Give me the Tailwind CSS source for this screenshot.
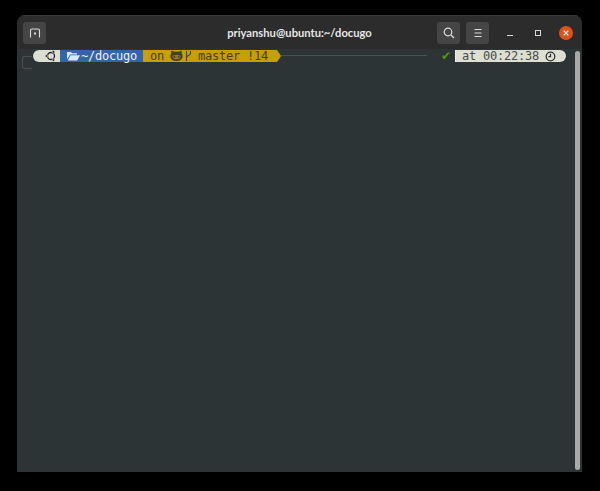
<!DOCTYPE html>
<html lang="en">
<head>
  <meta charset="UTF-8" />
  <title>priyanshu@ubuntu:~/docugo</title>
  <script src="https://cdn.jsdelivr.net/npm/@tailwindcss/browser@4"></script>
</head>
<body class="bg-black w-[600px] h-[491px] overflow-hidden pt-[15px] pl-[17px]">
  <div class="w-[565px] h-[457px] flex flex-col rounded-t-[8px] overflow-hidden">
    <!-- Header -->
    <header class="h-[34px] shrink-0 bg-[#2c2c2c] border-t border-[#3a3a3a] relative flex items-center pl-[6px] pr-[8px] font-['Lato',sans-serif]">
      <button class="w-[23px] h-[22px] rounded-[3px] bg-[#454545] flex items-center justify-center">
        <svg width="12" height="12" viewBox="0 0 12 12" fill="none" stroke="#dcdcdc" stroke-width="1.1">
          <path d="M1.500 10.500V3.500a1.500 1.500 0 0 1 1.500-1.500h6a1.500 1.500 0 0 1 1.500 1.500v7"/>
          <rect x="5" y="5.500" width="2" height="2" fill="#dcdcdc" stroke="none"/>
        </svg>
      </button>
      <h1 class="absolute left-0 right-0 text-center text-[#e6e6e6] text-[11.2px] font-bold leading-none">priyanshu@ubuntu:~/docugo</h1>
      <button class="ml-auto w-[23px] h-[22px] rounded-[3px] bg-[#454545] flex items-center justify-center">
        <svg width="12" height="12" viewBox="0 0 12 12" fill="none" stroke="#dcdcdc" stroke-width="1.2">
          <circle cx="5" cy="5" r="3.800"/>
          <path d="M8 8l3 3"/>
        </svg>
      </button>
      <button class="ml-[6px] w-[23px] h-[22px] rounded-[3px] bg-[#454545] flex items-center justify-center">
        <svg width="10" height="10" viewBox="0 0 10 10" stroke="#dcdcdc" stroke-width="1">
          <path d="M1.500 1.500h7M1.500 5h7M1.500 8.500h7"/>
        </svg>
      </button>
      <div class="ml-[16px] w-[10px] flex justify-center">
        <span class="block w-[6px] h-px mt-[5px] bg-[#d8d8d8]"></span>
      </div>
      <div class="ml-[18px] w-[10px] flex justify-center">
        <span class="block w-[6px] h-[6px] border border-[#d8d8d8]"></span>
      </div>
      <div class="ml-[16px] mr-px w-[14px] h-[14px] rounded-full bg-[#e0501c] flex items-center justify-center">
        <svg width="6" height="6" viewBox="0 0 6 6" stroke="#fff" stroke-width="1.2"><path d="M.7.700l4.600 4.600M5.300.700L.7 5.300"/></svg>
      </div>
    </header>

    <!-- Terminal -->
    <main class="flex-1 bg-[#2d3436] flex relative">
      <div class="flex-1 min-w-0 pl-[16px] pt-px">
        <div class="flex items-center h-[12px] font-['DejaVu_Sans_Mono',monospace] text-[12px] tracking-[-0.22px] leading-none whitespace-nowrap">
          <div class="w-[27px] h-full bg-[#dcdfd2] rounded-l-full flex items-center justify-end pr-[3px]">
            <svg width="12" height="12" viewBox="0 0 12 12" fill="none" stroke="#23262a" stroke-width="1.300">
              <circle cx="6" cy="6" r="3.500"/>
              <circle cx="1.500" cy="6" r="1.300" fill="#23262a" stroke="#dcdfd2" stroke-width=".6"/>
              <circle cx="8.400" cy="1.900" r="1.300" fill="#23262a" stroke="#dcdfd2" stroke-width=".6"/>
              <circle cx="8.400" cy="10.100" r="1.300" fill="#23262a" stroke="#dcdfd2" stroke-width=".6"/>
            </svg>
          </div>
          <div class="w-[83px] h-full bg-[#3465a4] text-[#eeeeec] flex items-center pl-[7px] gap-[1px]">
            <svg width="13" height="10" viewBox="0 0 13 10" fill="#dfe6ee">
              <path d="M0 1h4l1 1.200h5v1.300H3L0 8.500z"/>
              <path d="M3.500 4.300H13L10.200 9.500H.8z"/>
            </svg>
            <span>~/docugo</span>
          </div>
          <div class="w-[134px] h-full bg-[#c4a000] text-[#41401f] flex items-center pl-[7px]">
            <span>on</span>
            <svg class="ml-[6px]" width="13" height="12" viewBox="0 0 13 12" fill="#41401f">
              <path d="M1.500 .5l3 1.300h4l3-1.300.3 3c1 1.500 1.200 3.500.2 5-1 1.700-2.800 2.500-5.500 2.500S2 10.200 1 8.500c-1-1.500-.8-3.500.2-5z"/>
              <ellipse cx="6.500" cy="7" rx="4" ry="2.300" fill="#8a7a2a"/>
              <circle cx="4.300" cy="6.900" r=".9" fill="#41401f"/>
              <circle cx="8.700" cy="6.900" r=".9" fill="#41401f"/>
            </svg>
            <svg class="ml-[2px]" width="7" height="12" viewBox="0 0 7 12" fill="none" stroke="#41401f" stroke-width="1.100">
              <path d="M1.500 1v10M5.500 1v2.500c0 2-4 2-4 4"/>
            </svg>
            <span class="ml-[6px]">master !14</span>
          </div>
          <div class="w-0 h-0 border-y-[6px] border-y-transparent border-l-[4px] border-l-[#c4a000]"></div>
          <div class="w-[146px] h-px -mt-px bg-[#4a5254]"></div>
          <span class="ml-[14px] w-[14px] text-[#4e9a06] font-['DejaVu_Sans',sans-serif]">✔</span>
          <div class="w-[111px] h-full bg-[#dcdfd2] text-[#464c4e] rounded-r-full flex items-center pl-[6px] border-l border-[#eef0e8]">
            <span>at 00:22:38</span>
            <svg class="ml-[6px]" width="11" height="11" viewBox="0 0 11 11" fill="none" stroke="#2e3436" stroke-width="1.300">
              <circle cx="5.500" cy="5.500" r="4.300"/>
              <path d="M5.500 2.800v2.900H3.400"/>
            </svg>
          </div>
        </div>
      </div>
      <!-- Leftover cursor box under the prompt -->
      <div class="absolute left-[5px] top-[7px] w-[10px] h-[13px] border border-r-0 border-[#4a5052] rounded-l-[3px]"></div>
      <!-- Scrollbar -->
      <div class="w-[8px] shrink-0 pt-[2px] pb-[2px] pr-[2px] pl-[1px]">
        <div class="w-[5px] h-full rounded-full bg-[#a9aaa8]"></div>
      </div>
    </main>
  </div>
</body>
</html>
